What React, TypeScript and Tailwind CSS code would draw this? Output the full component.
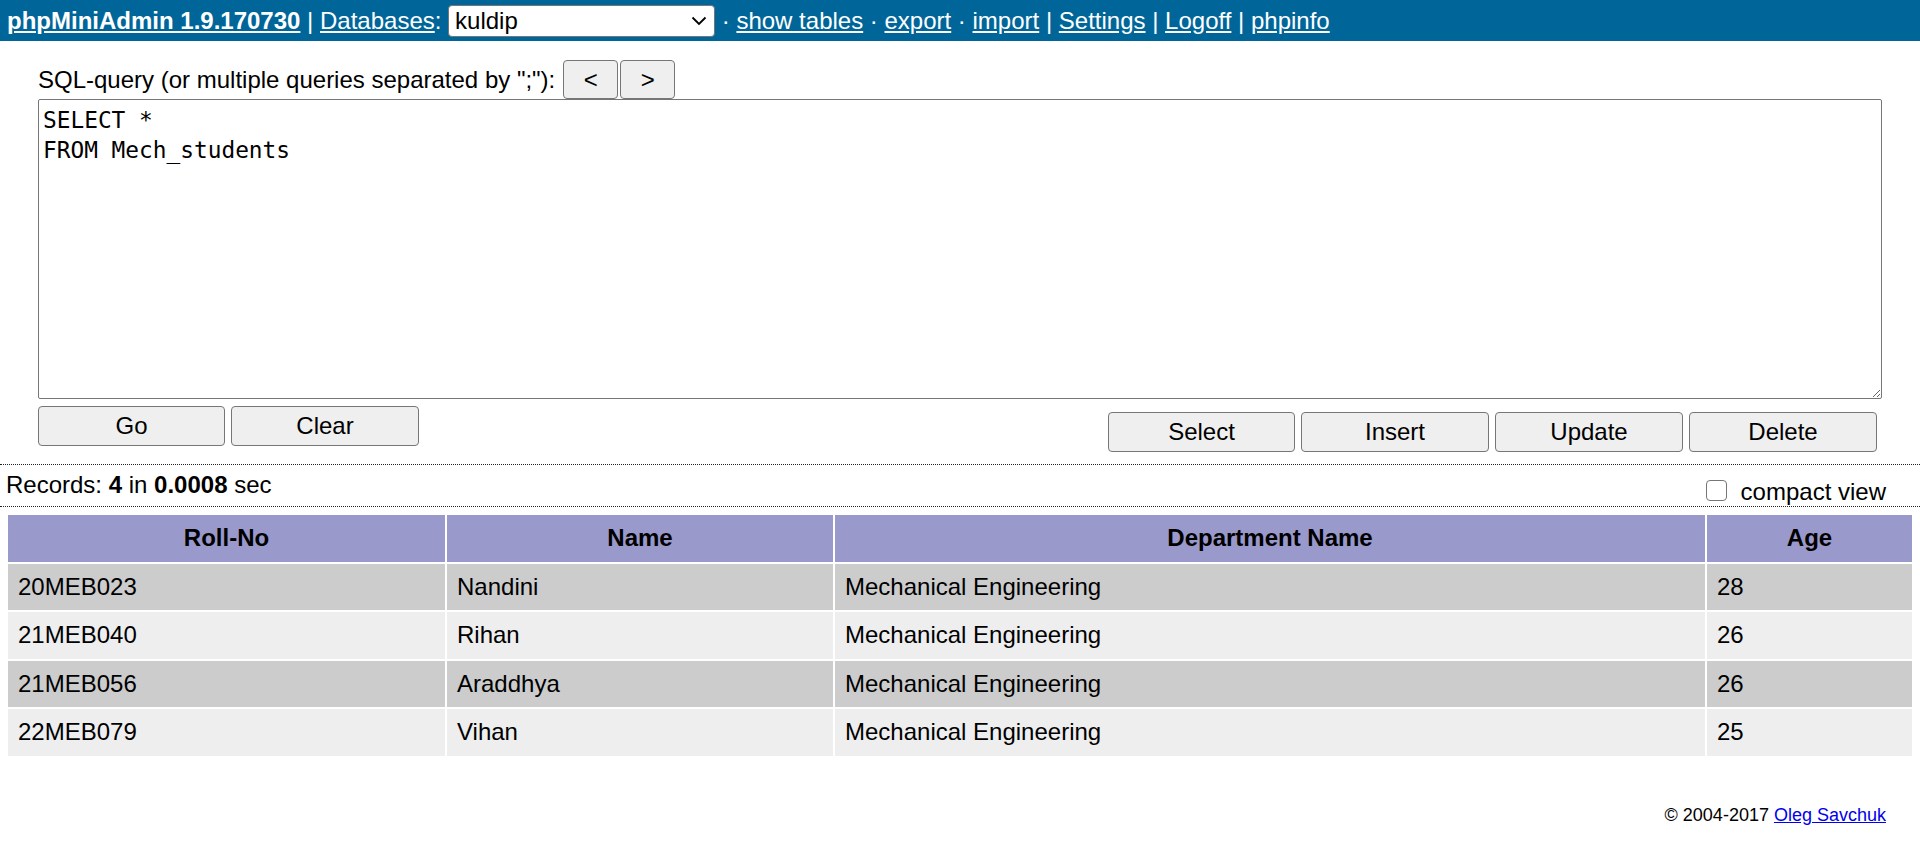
import React from "react";

const rows = [
  ["20MEB023", "Nandini", "Mechanical Engineering", "28"],
  ["21MEB040", "Rihan", "Mechanical Engineering", "26"],
  ["21MEB056", "Araddhya", "Mechanical Engineering", "26"],
  ["22MEB079", "Vihan", "Mechanical Engineering", "25"],
];

function Btn({ children, className }: { children: React.ReactNode; className: string }) {
  return (
    <button className={"bg-[#efefef] border border-[#767676] rounded-[4px] text-black text-[24px] leading-[28px] " + className}>
      {children}
    </button>
  );
}

export default function App() {
  return (
    <div className="min-h-[844px] bg-white text-black text-[24px] leading-[28px]" style={{ fontFamily: '"Liberation Sans", Arial, sans-serif' }}>
      {/* Header */}
      <div className="bg-[#006699] text-white h-[41px] flex items-center pl-[7px] whitespace-pre">
        <a className="underline font-bold">phpMiniAdmin 1.9.170730</a>
        <span> | </span>
        <a className="underline">Databases</a>
        <span>: </span>
        <div className="relative w-[267px] h-[32px]">
          <select
            className="appearance-none w-full h-full bg-white text-black border border-[#767676] rounded-[4px] pl-[6px] text-[24px] leading-[28px]"
            defaultValue="kuldip"
          >
            <option value="kuldip">kuldip</option>
          </select>
          <svg className="absolute right-[8px] top-[11px] pointer-events-none" width="16" height="10" viewBox="0 0 16 10">
            <path d="M1.5 1.5 L8 8 L14.5 1.5" fill="none" stroke="#000" strokeWidth="1.8" />
          </svg>
        </div>
        <span> · </span>
        <a className="underline">show tables</a>
        <span> · </span>
        <a className="underline">export</a>
        <span> · </span>
        <a className="underline">import</a>
        <span> | </span>
        <a className="underline">Settings</a>
        <span> | </span>
        <a className="underline">Logoff</a>
        <span> | </span>
        <a className="underline">phpinfo</a>
      </div>

      {/* Query form */}
      <div className="pl-[38px] pr-[38px]">
        <div className="flex items-center mt-[19px] h-[39px]">
          <span className="whitespace-pre">SQL-query (or multiple queries separated by ";"):</span>
          <Btn className="ml-[8px] w-[55px] h-[39px]">&lt;</Btn>
          <Btn className="ml-[2px] w-[55px] h-[39px]">&gt;</Btn>
        </div>
        <textarea
          className="block w-full h-[300px] border border-[#767676] rounded-[2px] pl-[4px] pt-[5px] text-[22.8px] leading-[30px] text-black"
          style={{ fontFamily: '"DejaVu Sans Mono", "Liberation Mono", monospace' }}
          defaultValue={"SELECT *\nFROM Mech_students"}
        />
        <div className="flex justify-between items-start">
          <div className="flex gap-[6px] mt-[7px]">
            <Btn className="w-[187px] h-[40px]">Go</Btn>
            <Btn className="w-[188px] h-[40px]">Clear</Btn>
          </div>
          <div className="flex gap-[6px] mt-[13px] mr-[5px]">
            <Btn className="w-[187px] h-[40px]">Select</Btn>
            <Btn className="w-[188px] h-[40px]">Insert</Btn>
            <Btn className="w-[188px] h-[40px]">Update</Btn>
            <Btn className="w-[188px] h-[40px]">Delete</Btn>
          </div>
        </div>
      </div>

      {/* Records bar */}
      <div className="mt-[12px] border-y border-dotted border-[#222] h-[43px] flex justify-between">
        <div className="pl-[6px] pt-[6px]">
          Records: <b>4</b> in <b>0.0008</b> sec
        </div>
        <div className="pr-[34px] pt-[13px] flex items-center h-[28px] box-content">
          <span className="inline-block w-[21px] h-[21px] border border-[#767676] rounded-[4px] bg-white mr-[14px] -mt-[3px]" />
          <span>compact view</span>
        </div>
      </div>

      {/* Table */}
      <div className="p-[7px]">
        <table className="w-full table-fixed border-separate border-spacing-0">
          <colgroup>
            <col className="w-[439px]" />
            <col className="w-[388px]" />
            <col className="w-[872px]" />
            <col className="w-[207px]" />
          </colgroup>
          <thead>
            <tr className="bg-[#9999cc]">
              {["Roll-No", "Name", "Department Name", "Age"].map((h) => (
                <th key={h} className="border border-white py-[9px] px-[10px] font-bold text-center leading-[28.5px]">
                  {h}
                </th>
              ))}
            </tr>
          </thead>
          <tbody>
            {rows.map((r, i) => (
              <tr key={r[0]} className={i % 2 === 0 ? "bg-[#cccccc]" : "bg-[#eeeeee]"}>
                {r.map((c, j) => (
                  <td key={j} className="border border-white py-[9px] px-[10px] text-left leading-[28.5px]">
                    {c}
                  </td>
                ))}
              </tr>
            ))}
          </tbody>
        </table>
      </div>

      {/* Footer */}
      <div className="mt-[41px] pr-[34px] text-right text-[18px] leading-[21px]">
        © 2004-2017 <a className="text-[#0000ee] underline">Oleg Savchuk</a>
      </div>
    </div>
  );
}
